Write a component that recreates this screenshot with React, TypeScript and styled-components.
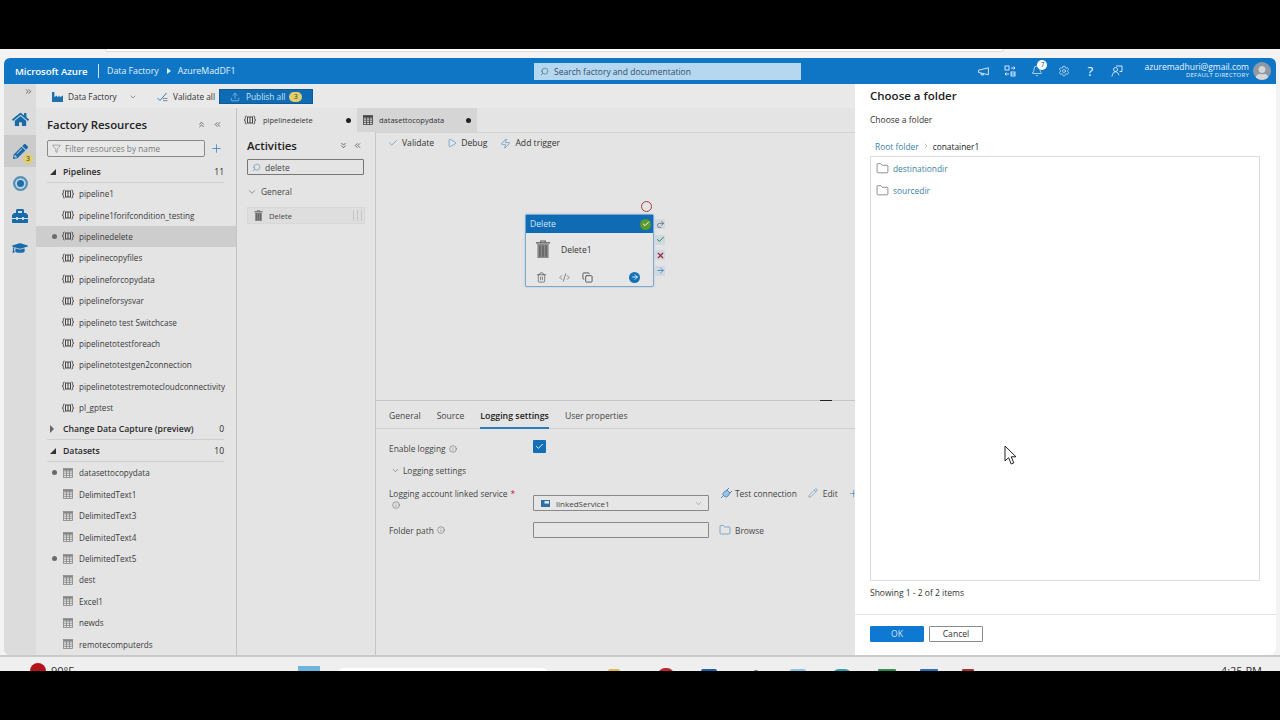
import React from 'react';
import styled, { createGlobalStyle } from 'styled-components';
import {
  ArrowRight,
  Bell,
  Check,
  ChevronDown,
  ChevronRight,
  ChevronsDown,
  ChevronsLeft,
  ChevronsRight,
  ChevronsUp,
  CodeXml,
  Copy,
  Filter,
  Folder,
  Info,
  Pencil,
  Play,
  Plus,
  Redo2,
  Search,
  Settings,
  Trash2,
  Upload,
  X,
  Zap,
} from 'lucide-react';
import { FaGraduationCap, FaHome, FaPencilAlt, FaToolbox, FaUser } from 'react-icons/fa';

const GlobalStyle = createGlobalStyle`
  html, body {
    margin: 0;
    padding: 0;
    background: #000;
    overflow: hidden;
  }
  * {
    box-sizing: border-box;
  }
  body {
    font-family: "Open Sans", "Liberation Sans", sans-serif;
    font-size: 9px;
    color: #333;
  }
`;

const pipelines = [
  { name: 'pipeline1' },
  { name: 'pipeline1forifcondition_testing' },
  { name: 'pipelinedelete', dirty: true, selected: true },
  { name: 'pipelinecopyfiles' },
  { name: 'pipelineforcopydata' },
  { name: 'pipelineforsysvar' },
  { name: 'pipelineto test Switchcase' },
  { name: 'pipelinetotestforeach' },
  { name: 'pipelinetotestgen2connection' },
  { name: 'pipelinetotestremotecloudconnectivity' },
  { name: 'pl_gptest' },
];

const datasets = [
  { name: 'datasettocopydata', dirty: true },
  { name: 'DelimitedText1' },
  { name: 'DelimitedText3' },
  { name: 'DelimitedText4' },
  { name: 'DelimitedText5', dirty: true },
  { name: 'dest' },
  { name: 'Excel1' },
  { name: 'newds' },
  { name: 'remotecomputerds' },
];

// bits of the desktop taskbar that still show under the browser window
const trayMarks = [
  { ml: 223, w: 22, c: '#6fb4dc', top: 9, radius: 0 },
  { ml: 17, w: 212, c: '#ffffff', top: 11, radius: 8 },
  { ml: 59, w: 12, c: '#e2b84a', top: 12, radius: 2 },
  { ml: 38, w: 16, c: '#b8262e', top: 11, radius: 8 },
  { ml: 27, w: 16, c: '#1f5fa8', top: 12, radius: 2 },
  { ml: 37, w: 4, c: '#5f8fb0', top: 13, radius: 1 },
  { ml: 32, w: 16, c: '#8cc4e0', top: 12, radius: 2 },
  { ml: 26, w: 20, c: '#2fa0a8', top: 12, radius: 9 },
  { ml: 26, w: 18, c: '#2f8f4f', top: 12, radius: 1 },
  { ml: 24, w: 18, c: '#2a6fb0', top: 12, radius: 1 },
  { ml: 24, w: 12, c: '#a03030', top: 12, radius: 1 },
];

const PipelineIcon = () => (
  <svg width="14" height="10" viewBox="0 0 14 10" fill="none" stroke="#444" strokeWidth="1">
    <path d="M3.5 1C2 1 2.4 2.2 2.4 3.4 2.4 4.4 1.8 5 1 5c.8 0 1.4.6 1.4 1.6C2.4 7.8 2 9 3.5 9" />
    <path d="M10.5 1C12 1 11.6 2.2 11.6 3.4c0 1 .6 1.6 1.4 1.6-.8 0-1.4.6-1.4 1.6C11.6 7.8 12 9 10.5 9" />
    <rect x="4.5" y="2" width="5" height="6" />
    <path d="M7 2v6" />
  </svg>
);

const TableIcon = ({ dark }: { dark?: boolean }) => (
  <svg width="10" height="10" viewBox="0 0 10 10" fill="none" stroke={dark ? '#444' : '#858585'} strokeWidth="0.8">
    <rect x="0.5" y="0.5" width="9" height="9" />
    <path d="M0.5 3h9M0.5 5.2h9M0.5 7.4h9M3.5 0.5v9M6.5 0.5v9" />
    <path d="M0.5 1.7h9" strokeWidth="1.6" />
  </svg>
);

const BinIcon = ({ size }: { size: number }) => (
  <svg width={size} height={size} viewBox="0 0 12 14" fill="none">
    <path d="M0.5 2.2h11" stroke="#555" strokeWidth="1" />
    <path d="M4.2 2V0.8h3.6V2" stroke="#555" strokeWidth="0.8" />
    <path d="M1.6 3.2h8.8V14H1.6z" fill="#8a8a8a" />
    <path d="M3.6 4.2V13M6 4.2V13M8.4 4.2V13" stroke="#555" strokeWidth="0.9" />
  </svg>
);

const FactoryIcon = () => (
  <svg width="11" height="10" viewBox="0 0 11 10" fill="#1d6fae">
    <path d="M0 0h2.4v5L5 3.4v1.8l2.6-1.8v1.8L11 3.4V10H0z" />
  </svg>
);

const ValidateAllIcon = () => (
  <svg width="11" height="10" viewBox="0 0 11 10" fill="none" stroke="#2d7fc0" strokeWidth="1">
    <path d="M0.5 6l2.5 2.5L9.5 1" />
    <path d="M6 6.5h4.5M6 8.7h4.5" stroke="#888" />
  </svg>
);

const MegaphoneIcon = () => (
  <svg width="11" height="9" viewBox="0 0 11 9" fill="none" stroke="#fff" strokeWidth="0.8">
    <path d="M0.5 3.2L10.4 0.8v7L0.5 5.4zM3 6l.4 2h2l-.3-1.5" />
  </svg>
);

const SwitchIcon = () => (
  <svg width="12" height="12" viewBox="0 0 12 12" fill="none" stroke="#fff" strokeWidth="0.8">
    <rect x="1" y="1" width="4" height="4" />
    <rect x="7" y="7" width="4" height="4" />
    <path d="M7 3h4M9.5 1.5L11 3 9.5 4.5M5 9H1M2.5 7.5L1 9l1.5 1.5M7 9h4" />
  </svg>
);

const FeedbackIcon = () => (
  <svg width="12" height="12" viewBox="0 0 12 12" fill="none" stroke="#fff" strokeWidth="0.8">
    <circle cx="4.5" cy="4.5" r="2" />
    <path d="M1 11.5c.3-2.8 1.6-4.6 3.5-4.6s3 1.4 3.4 3.4M5 1h6v5.5H8.6" />
  </svg>
);

const PlugIcon = () => (
  <svg width="13" height="12" viewBox="0 0 13 12" fill="none" stroke="#3b82bd" strokeWidth="0.9">
    <path d="M1 11l3-3M9 1L7 3M12 4l-2 2" />
    <path d="M3.5 5.5L7 3l3 3-2.5 3.5c-1.5 1-3 .2-4-1s-1-2 0-3z" fill="#9cc0dd" />
  </svg>
);

const StoreIcon = () => (
  <svg width="9" height="7" viewBox="0 0 9 7">
    <rect width="9" height="7" fill="#2f6f9f" />
    <rect x="3.5" y="1" width="4.5" height="2.6" fill="#d7e6f1" />
  </svg>
);

const PointerIcon = () => (
  <svg width="14" height="21" viewBox="0 0 14 21">
    <path d="M1 1v15l3.6-3.3 2.6 6.3 2.6-1.1-2.6-6.1H12z" fill="#fff" stroke="#222" strokeWidth="1" />
  </svg>
);

const FlippedSearch = styled(Search)`
  transform: scaleX(-1);
`;

const Page = styled.div`
  width: 1280px;
  height: 720px;
  background: #000;
  display: flex;
  flex-direction: column;
  overflow: hidden;
`;

const Letterbox = styled.div`
  height: 49px;
  flex: none;
  background: #000;
`;

const Desktop = styled.div`
  flex: none;
  background: #f3f3f3;
`;

const TopStrip = styled.div`
  height: 9px;
  padding: 0 276px 0 105px;
`;

const BrowserTabEdge = styled.div`
  height: 3px;
  background: #fff;
  border: 1px solid #ddd;
  border-top: 0;
  border-radius: 0 0 10px 10px;
`;

const Taskbar = styled.div`
  height: 16px;
  flex: none;
  background: #efefef;
  border-top: 2px solid #c9c9c9;
  display: flex;
  align-items: flex-start;
  overflow: hidden;
  padding: 0 18px 0 30px;
`;

const WeatherDot = styled.span`
  width: 16px;
  height: 16px;
  margin-top: 6px;
  border-radius: 50%;
  background: #b3141c;
  flex: none;
`;

const TaskbarText = styled.span`
  font-size: 11px;
  line-height: 13px;
  margin-top: 7px;
  color: #333;
  white-space: nowrap;
`;

const WeatherText = styled(TaskbarText)`
  margin-left: 5px;
  width: 24px;
`;

const Clock = styled(TaskbarText)`
  margin-left: auto;
`;

const TrayMark = styled.span<{ $c: string; $w: number; $ml: number; $top: number; $radius: number }>`
  width: ${(p) => p.$w}px;
  height: 14px;
  margin-top: ${(p) => p.$top}px;
  margin-left: ${(p) => p.$ml}px;
  background: ${(p) => p.$c};
  flex: none;
  border-radius: ${(p) => p.$radius}px;
`;

const AppWindow = styled.div`
  width: 1272px;
  height: 597px;
  margin-left: 4px;
  display: flex;
  flex-direction: column;
  background: #e4e4e4;
  border-radius: 6px;
  overflow: hidden;
  position: relative;
`;

const Header = styled.header`
  height: 26px;
  flex: none;
  background: #0f76c6;
  display: flex;
  align-items: center;
  color: #fff;
  padding-left: 11px;
  position: relative;
`;

const Brand = styled.span`
  font-size: 9.7px;
  font-weight: 600;
  width: 83px;
  white-space: nowrap;
  letter-spacing: -0.1px;
`;

const HeaderDivider = styled.span`
  width: 1px;
  height: 14px;
  background: #cfe4f5;
  margin-right: 8px;
`;

const Crumb = styled.span`
  font-size: 8.8px;
  color: #e2f0fa;
  white-space: nowrap;
`;

const CrumbArrow = styled.span`
  width: 0;
  height: 0;
  margin: 0 7px 0 8px;
  border-left: 4px solid #e2f0fa;
  border-top: 3px solid transparent;
  border-bottom: 3px solid transparent;
`;

const GlobalSearch = styled.div`
  position: absolute;
  left: 530px;
  top: 5px;
  width: 267px;
  height: 17px;
  background: #b6d7f0;
  display: flex;
  align-items: center;
  gap: 5px;
  padding-left: 6px;
  font-size: 8.5px;
  color: #2f5068;
`;

const HeaderRight = styled.div`
  margin-left: auto;
  display: flex;
  align-items: center;
  padding-right: 5px;
`;

const HeaderIcon = styled.span`
  width: 26.8px;
  display: flex;
  justify-content: center;
  color: #fff;
  position: relative;
  font-size: 13px;
  line-height: 12px;
`;

const BellBadge = styled.span`
  position: absolute;
  top: -5px;
  left: 14px;
  width: 10px;
  height: 10px;
  border-radius: 50%;
  background: #fff;
  color: #14619c;
  font-size: 7px;
  line-height: 10px;
  text-align: center;
`;

const Account = styled.div`
  display: flex;
  flex-direction: column;
  align-items: flex-end;
  margin-left: 14px;
  margin-right: 4px;
  line-height: 9px;
`;

const AccountMail = styled.span`
  font-size: 8.5px;
  color: #eaf4fb;
`;

const AccountDir = styled.span`
  font-size: 6px;
  color: #e3eff8;
  letter-spacing: 0.25px;
`;

const Avatar = styled.span`
  width: 18px;
  height: 18px;
  border-radius: 50%;
  background: #8d9aa5;
  display: flex;
  align-items: flex-end;
  justify-content: center;
  overflow: hidden;
  color: #d6d6d6;
`;

const Body = styled.div`
  flex: 1;
  min-height: 0;
  display: flex;
`;

const Rail = styled.nav`
  width: 32px;
  flex: none;
  background: #dcdcdc;
  display: flex;
  flex-direction: column;
  align-items: stretch;
`;

const RailToggle = styled.div`
  height: 20px;
  display: flex;
  justify-content: flex-end;
  padding: 3px 3px 0 0;
  color: #444;
`;

const RailItem = styled.div<{ $active?: boolean; $h?: number }>`
  height: ${(p) => p.$h ?? 32.4}px;
  display: flex;
  align-items: center;
  justify-content: center;
  background: ${(p) => (p.$active ? '#cbcbcb' : 'transparent')};
  color: #176ba8;
  position: relative;
`;

const RailBadge = styled.span`
  position: absolute;
  right: 3px;
  bottom: 3px;
  width: 10px;
  height: 10px;
  border-radius: 50%;
  background: #e3cf6a;
  color: #333;
  font-size: 7px;
  line-height: 10px;
  text-align: center;
`;

const Gauge = styled.span`
  width: 15px;
  height: 15px;
  border-radius: 50%;
  background: #1d6fa8;
  border: 2px solid #5a8fb5;
  box-shadow: inset 0 0 0 2px #bcd4e4;
`;

const Workspace = styled.div`
  flex: 1;
  min-width: 0;
  display: flex;
  flex-direction: column;
  overflow: hidden;
`;

const TopToolbar = styled.div`
  height: 24px;
  flex: none;
  background: #e9e9e9;
  display: flex;
  align-items: center;
  padding: 1px 0 0 16px;
  font-size: 8.3px;
  color: #333;
`;

const ToolItem = styled.span<{ $w: number }>`
  display: flex;
  align-items: center;
  gap: 5px;
  width: ${(p) => p.$w}px;
  white-space: nowrap;
`;

const ToolChevron = styled(ChevronDown)`
  margin-left: 7px;
  color: #666;
`;

const PublishButton = styled.span`
  width: 94px;
  height: 15px;
  background: #0f6cb4;
  border: 1px solid #0c5b98;
  color: #cde3f4;
  display: flex;
  align-items: center;
  gap: 6px;
  padding-left: 10px;
`;

const PublishCount = styled.span`
  width: 13px;
  height: 10px;
  margin-left: -2px;
  border-radius: 5px;
  background: #e3cf6a;
  color: #333;
  font-size: 7px;
  line-height: 10px;
  text-align: center;
`;

const Columns = styled.div`
  flex: 1;
  min-height: 0;
  display: flex;
`;

const Resources = styled.aside`
  width: 201px;
  flex: none;
  border-right: 1px solid #c4c4c4;
  display: flex;
  flex-direction: column;
  overflow: hidden;
`;

const ResHead = styled.div`
  display: flex;
  align-items: center;
  justify-content: space-between;
  padding: 0 14px 0 11px;
  height: 32px;
  flex: none;
  color: #333;
`;

const PanelTitle = styled.h2`
  margin: 0;
  font-size: 11.4px;
  font-weight: 600;
  color: #222;
  white-space: nowrap;
`;

const IconPair = styled.span<{ $gap?: number }>`
  display: flex;
  gap: ${(p) => p.$gap ?? 5}px;
  color: #444;
`;

const FilterRow = styled.div`
  display: flex;
  align-items: center;
  gap: 5px;
  padding-left: 11px;
  height: 17px;
  flex: none;
  color: #3a87c4;
`;

const FilterInput = styled.div`
  width: 158px;
  height: 17px;
  border: 1px solid #8a8a8a;
  border-radius: 2px;
  display: flex;
  align-items: center;
  gap: 4px;
  padding-left: 4px;
  font-size: 8.3px;
  color: #7a7a7a;
  background: #e8e8e8;
`;

const TreeHead = styled.div<{ $first?: boolean }>`
  height: 22px;
  flex: none;
  margin: ${(p) => (p.$first ? '4px' : '0')} 12px 0 11px;
  display: flex;
  align-items: center;
  border-bottom: 1px solid #cfcfcf;
  font-weight: 600;
  color: #2a2a2a;
  font-size: 8.7px;
`;

const TreeCaret = styled.span`
  width: 16px;
  display: flex;
  color: #333;
`;

const CaretDown = styled.span`
  width: 0;
  height: 0;
  margin-left: 3px;
  border-left: 6px solid transparent;
  border-bottom: 6px solid #333;
`;

const CaretRight = styled.span`
  width: 0;
  height: 0;
  margin-left: 3px;
  border-left: 4px solid #666;
  border-top: 4px solid transparent;
  border-bottom: 4px solid transparent;
`;

const TreeCount = styled.span`
  margin-left: auto;
  font-weight: 400;
  font-size: 8.5px;
`;

const TreeRow = styled.div<{ $selected?: boolean }>`
  height: 21.4px;
  flex: none;
  display: flex;
  align-items: center;
  padding-left: 16px;
  background: ${(p) => (p.$selected ? '#cdcdcd' : 'transparent')};
  color: #3a3a3a;
  font-size: 8.15px;
  white-space: nowrap;
`;

const DirtyDot = styled.span<{ $on?: boolean; $c?: string }>`
  width: 5px;
  height: 5px;
  border-radius: 50%;
  background: ${(p) => (p.$on === false ? 'transparent' : p.$c ?? '#6b6b6b')};
  flex: none;
`;

const RowIcon = styled.span`
  width: 14px;
  margin: 0 4px;
  display: flex;
  justify-content: center;
  flex: none;
`;

const EditorArea = styled.div`
  flex: 1;
  min-width: 0;
  display: flex;
  flex-direction: column;
`;

const DocTabs = styled.div`
  height: 24px;
  flex: none;
  display: flex;
`;

const DocTab = styled.div<{ $active?: boolean }>`
  width: 120px;
  display: flex;
  align-items: center;
  padding: 0 6px 0 6px;
  gap: 6px;
  background: ${(p) => (p.$active ? '#e4e4e4' : '#d5d5d5')};
  font-size: 7.5px;
  color: #333;
  & > span:nth-child(2) {
    flex: 1;
    white-space: nowrap;
  }
`;

const EditorRow = styled.div`
  flex: 1;
  min-height: 0;
  display: flex;
`;

const Activities = styled.section`
  width: 139px;
  flex: none;
  border-right: 1px solid #c4c4c4;
  padding: 0 10px;
  display: flex;
  flex-direction: column;
`;

const ActivitiesHead = styled.div`
  display: flex;
  align-items: center;
  justify-content: space-between;
  height: 27px;
  padding-right: 3px;
`;

const SearchBox = styled.div`
  height: 16px;
  width: 117px;
  border: 1px solid #777;
  border-radius: 1px;
  display: flex;
  align-items: center;
  gap: 4px;
  padding-left: 4px;
  font-size: 8.5px;
  color: #444;
  & > svg {
    color: #4a7fb0;
  }
`;

const GroupLabel = styled.div`
  display: flex;
  align-items: center;
  gap: 4px;
  margin-top: 8px;
  height: 17px;
  font-size: 8.4px;
  color: #444;
`;

const ActivityItem = styled.div`
  height: 17px;
  width: 118px;
  margin-top: 7px;
  background: #dedede;
  border: 1px solid #d7d7d7;
  display: flex;
  align-items: center;
  gap: 5px;
  padding-left: 5px;
  font-size: 7.6px;
  color: #444;
  position: relative;
`;

const Grip = styled.span`
  position: absolute;
  right: 2px;
  top: 2px;
  bottom: 2px;
  width: 9px;
  background: repeating-linear-gradient(90deg, #c6c6c6 0 1px, transparent 1px 4px);
`;

const Designer = styled.section`
  flex: 1;
  min-width: 0;
  display: flex;
  flex-direction: column;
  border-top: 1px solid #d4d4d4;
`;

const DesignerBar = styled.div`
  height: 20px;
  flex: none;
  display: flex;
  align-items: center;
  padding-left: 12px;
  gap: 13px;
  font-size: 8.6px;
  color: #333;
  & svg {
    color: #2d7fc0;
  }
`;

const BarAction = styled.span`
  display: flex;
  align-items: center;
  gap: 4px;
  white-space: nowrap;
`;

const Canvas = styled.div`
  height: 248px;
  flex: none;
  position: relative;
  border-bottom: 1px solid #c4c4c4;
`;

const ResizeMark = styled.span`
  position: absolute;
  left: 444px;
  bottom: -1px;
  width: 12px;
  height: 1.5px;
  background: #222;
`;

const NodeCircle = styled.span`
  position: absolute;
  left: 265px;
  top: 48px;
  width: 11px;
  height: 11px;
  border-radius: 50%;
  border: 1px solid #a83a4a;
`;

const Node = styled.div`
  position: absolute;
  left: 149px;
  top: 61px;
  width: 129px;
  height: 73px;
  background: #e6e6e6;
  border: 1px solid #7ba8cc;
  border-radius: 2px;
  box-shadow: 0 0 2px #9cbcd6;
  display: flex;
  flex-direction: column;
`;

const NodeTitle = styled.div`
  height: 18px;
  flex: none;
  background: #0f6bb3;
  color: #d4e8f6;
  font-size: 8.6px;
  display: flex;
  align-items: center;
  justify-content: space-between;
  padding: 0 2px 0 4px;
`;

const OkBadge = styled.span`
  width: 11px;
  height: 11px;
  border-radius: 50%;
  background: #5b9b2a;
  color: #fff;
  display: flex;
  align-items: center;
  justify-content: center;
`;

const NodeBody = styled.div`
  flex: 1;
  display: flex;
  align-items: center;
  gap: 9px;
  padding: 0 0 3px 8px;
  color: #333;
  font-size: 8.5px;
`;

const NodeActions = styled.div`
  height: 18px;
  flex: none;
  display: flex;
  align-items: center;
  padding: 0 13px 0 10px;
  gap: 12px;
  color: #4a4a4a;
`;

const NodeGo = styled.span`
  margin-left: auto;
  width: 11px;
  height: 11px;
  border-radius: 50%;
  background: #1473b8;
  color: #fff;
  display: flex;
  align-items: center;
  justify-content: center;
`;

const NodePorts = styled.div`
  position: absolute;
  left: 279px;
  top: 66px;
  display: flex;
  flex-direction: column;
  gap: 5.5px;
`;

const Port = styled.span<{ $c: string }>`
  width: 10px;
  height: 10px;
  background: #ced9e2;
  color: ${(p) => p.$c};
  display: flex;
  align-items: center;
  justify-content: center;
`;

const BottomPanel = styled.div`
  flex: 1;
  min-height: 0;
  overflow: hidden;
`;

const PanelTabs = styled.div`
  height: 28px;
  border-bottom: 1px solid #d0d0d0;
  display: flex;
  padding-left: 13px;
  gap: 16px;
  font-size: 8.6px;
  color: #444;
`;

const PanelTab = styled.span<{ $active?: boolean }>`
  display: flex;
  align-items: center;
  height: 28px;
  padding-top: 3px;
  white-space: nowrap;
  font-weight: ${(p) => (p.$active ? 600 : 400)};
  font-size: ${(p) => (p.$active ? 8.8 : 8.6)}px;
  color: ${(p) => (p.$active ? '#222' : '#444')};
  border-bottom: 2px solid ${(p) => (p.$active ? '#2b7cbc' : 'transparent')};
`;

const Form = styled.div`
  display: grid;
  grid-template-columns: 144px 1fr;
  padding: 10px 0 0 13px;
  font-size: 8.4px;
  color: #444;
  align-items: center;
  width: 479px;
`;

const FieldLabel = styled.div<{ $h: number }>`
  height: ${(p) => p.$h}px;
  display: flex;
  align-items: center;
  gap: 3px;
  white-space: nowrap;
  color: #444;
`;

const Required = styled.span`
  color: #c22;
  margin-left: 3px;
`;

const TwoLine = styled.div`
  display: flex;
  flex-direction: column;
  gap: 2px;
  height: 38px;
  padding-top: 6px;
  white-space: nowrap;
`;

const LabelInfo = styled(Info)`
  margin-left: 3px;
`;

const CheckBox = styled.span`
  width: 13px;
  height: 13px;
  margin-top: -4px;
  background: #136fb6;
  color: #fff;
  display: flex;
  align-items: center;
  justify-content: center;
  border-radius: 1px;
`;

const FoldRow = styled.div`
  grid-column: 1 / span 2;
  height: 24px;
  display: flex;
  align-items: center;
  gap: 3px;
  padding-left: 2px;
`;

const FieldRow = styled.div<{ $top?: number }>`
  display: flex;
  align-items: center;
  white-space: nowrap;
  min-width: 0;
  align-self: ${(p) => (p.$top ? 'start' : 'center')};
  padding-top: ${(p) => p.$top ?? 0}px;
`;

const Select = styled.div`
  width: 176px;
  height: 16px;
  border: 1px solid #888;
  border-radius: 1px;
  display: flex;
  align-items: center;
  padding: 0 5px 0 7px;
  gap: 6px;
  font-size: 8px;
  color: #444;
  flex: none;
  background: #e6e6e6;
  & > svg:last-child {
    margin-left: auto;
    color: #777;
  }
`;

const FieldAction = styled.span<{ $ml: number; $gap?: number; $raised?: boolean }>`
  display: flex;
  align-items: center;
  gap: ${(p) => p.$gap ?? 4}px;
  height: 12px;
  margin-left: ${(p) => p.$ml}px;
  margin-top: ${(p) => (p.$raised ? '-8px' : '0')};
  align-self: ${(p) => (p.$raised ? 'flex-start' : 'center')};
  color: #444;
  flex: none;
  & > svg {
    color: #3b82bd;
  }
`;

const FolderPanel = styled.aside`
  width: 421px;
  flex: none;
  background: #fff;
  display: flex;
  flex-direction: column;
`;

const FolderBody = styled.div`
  flex: 1;
  min-height: 0;
  display: flex;
  flex-direction: column;
  padding: 0 16px 0 15px;
`;

const FolderTitle = styled.h1`
  margin: 3px 0 0;
  height: 17px;
  font-size: 11.5px;
  line-height: 17px;
  font-weight: 600;
  color: #222;
`;

const FolderSub = styled.div`
  margin-top: 10px;
  height: 12px;
  font-size: 8.5px;
  line-height: 12px;
  color: #333;
`;

const Breadcrumb = styled.div`
  margin-top: 13px;
  height: 14px;
  display: flex;
  align-items: center;
  gap: 3px;
  padding-left: 5px;
  font-size: 8.4px;
  color: #222;
  & > svg {
    color: #666;
  }
`;

const RootLink = styled.span`
  color: #3b7fa6;
`;

const FolderBox = styled.div`
  margin-top: 3px;
  height: 425px;
  flex: none;
  border: 1px solid #dcdcdc;
  padding: 0 0 0 5px;
`;

const FolderRow = styled.div`
  height: 22.4px;
  display: flex;
  align-items: center;
  gap: 4px;
  font-size: 8.4px;
  color: #3b7fa6;
  & > svg {
    color: #333;
  }
`;

const Showing = styled.div`
  margin-top: 6px;
  font-size: 8.5px;
  color: #333;
`;

const FolderFoot = styled.div`
  height: 41px;
  flex: none;
  border-top: 1px solid #e3e3e3;
  display: flex;
  align-items: flex-start;
  gap: 5px;
  padding: 11px 0 0 15px;
`;

const Button = styled.span<{ $primary?: boolean }>`
  width: 54px;
  height: 16px;
  display: flex;
  align-items: center;
  justify-content: center;
  font-size: 8.6px;
  border-radius: 1px;
  background: ${(p) => (p.$primary ? '#0f78d0' : '#fff')};
  color: ${(p) => (p.$primary ? '#cfe6f8' : '#333')};
  border: 1px solid ${(p) => (p.$primary ? '#0f78d0' : '#8a8a8a')};
`;

const Pointer = styled.span`
  position: absolute;
  left: 1000px;
  top: 387px;
  display: flex;
`;

type TreeItem = { name: string; dirty?: boolean; selected?: boolean };

const Tree = ({ items, icon }: { items: TreeItem[]; icon: 'pipe' | 'table' }) => (
  <>
    {items.map((item) => (
      <TreeRow key={item.name} $selected={item.selected}>
        <DirtyDot $on={!!item.dirty} />
        <RowIcon>{icon === 'pipe' ? <PipelineIcon /> : <TableIcon />}</RowIcon>
        {item.name}
      </TreeRow>
    ))}
  </>
);

const App = () => {
  return (
    <Page>
      <GlobalStyle />
      <Letterbox />
      <Desktop>
        <TopStrip>
          <BrowserTabEdge />
        </TopStrip>
        <AppWindow>
          <Header>
            <Brand>Microsoft Azure</Brand>
            <HeaderDivider />
            <Crumb>Data Factory</Crumb>
            <CrumbArrow />
            <Crumb>AzureMadDF1</Crumb>
            <GlobalSearch>
              <FlippedSearch size={9} strokeWidth={1.4} />
              Search factory and documentation
            </GlobalSearch>
            <HeaderRight>
              <HeaderIcon>
                <MegaphoneIcon />
              </HeaderIcon>
              <HeaderIcon>
                <SwitchIcon />
              </HeaderIcon>
              <HeaderIcon>
                <Bell size={12} strokeWidth={1.3} />
                <BellBadge>7</BellBadge>
              </HeaderIcon>
              <HeaderIcon>
                <Settings size={12} strokeWidth={1.2} />
              </HeaderIcon>
              <HeaderIcon>?</HeaderIcon>
              <HeaderIcon>
                <FeedbackIcon />
              </HeaderIcon>
              <Account>
                <AccountMail>azuremadhuri@gmail.com</AccountMail>
                <AccountDir>DEFAULT DIRECTORY</AccountDir>
              </Account>
              <Avatar>
                <FaUser size={14} />
              </Avatar>
            </HeaderRight>
          </Header>
          <Body>
            <Rail>
              <RailToggle>
                <ChevronsRight size={9} />
              </RailToggle>
              <RailItem $h={31}>
                <FaHome size={17} />
              </RailItem>
              <RailItem $active>
                <FaPencilAlt size={15} />
                <RailBadge>3</RailBadge>
              </RailItem>
              <RailItem>
                <Gauge />
              </RailItem>
              <RailItem>
                <FaToolbox size={16} />
              </RailItem>
              <RailItem>
                <FaGraduationCap size={16} />
              </RailItem>
            </Rail>
            <Workspace>
              <TopToolbar>
                <ToolItem $w={105}>
                  <FactoryIcon />
                  Data Factory
                  <ToolChevron size={8} />
                </ToolItem>
                <ToolItem $w={62}>
                  <ValidateAllIcon />
                  Validate all
                </ToolItem>
                <PublishButton>
                  <Upload size={10} strokeWidth={1.3} />
                  Publish all
                  <PublishCount>3</PublishCount>
                </PublishButton>
              </TopToolbar>
              <Columns>
                <Resources>
                  <ResHead>
                    <PanelTitle>Factory Resources</PanelTitle>
                    <IconPair $gap={7}>
                      <ChevronsUp size={9} />
                      <ChevronsLeft size={9} />
                    </IconPair>
                  </ResHead>
                  <FilterRow>
                    <FilterInput>
                      <Filter size={9} color="#666" strokeWidth={1.3} />
                      Filter resources by name
                    </FilterInput>
                    <Plus size={13} strokeWidth={1.5} />
                  </FilterRow>
                  <TreeHead $first>
                    <TreeCaret>
                      <CaretDown />
                    </TreeCaret>
                    Pipelines
                    <TreeCount>11</TreeCount>
                  </TreeHead>
                  <Tree items={pipelines} icon="pipe" />
                  <TreeHead>
                    <TreeCaret>
                      <CaretRight />
                    </TreeCaret>
                    Change Data Capture (preview)
                    <TreeCount>0</TreeCount>
                  </TreeHead>
                  <TreeHead>
                    <TreeCaret>
                      <CaretDown />
                    </TreeCaret>
                    Datasets
                    <TreeCount>10</TreeCount>
                  </TreeHead>
                  <Tree items={datasets} icon="table" />
                </Resources>
                <EditorArea>
                  <DocTabs>
                    <DocTab $active>
                      <PipelineIcon />
                      <span>pipelinedelete</span>
                      <DirtyDot $c="#222" />
                    </DocTab>
                    <DocTab>
                      <TableIcon dark />
                      <span>datasettocopydata</span>
                      <DirtyDot $c="#222" />
                    </DocTab>
                  </DocTabs>
                  <EditorRow>
                    <Activities>
                      <ActivitiesHead>
                        <PanelTitle>Activities</PanelTitle>
                        <IconPair>
                          <ChevronsDown size={9} />
                          <ChevronsLeft size={9} />
                        </IconPair>
                      </ActivitiesHead>
                      <SearchBox>
                        <FlippedSearch size={9} strokeWidth={1.4} />
                        delete
                      </SearchBox>
                      <GroupLabel>
                        <ChevronDown size={10} strokeWidth={1.3} />
                        General
                      </GroupLabel>
                      <ActivityItem>
                        <BinIcon size={11} />
                        Delete
                        <Grip />
                      </ActivityItem>
                    </Activities>
                    <Designer>
                      <DesignerBar>
                        <BarAction>
                          <Check size={10} strokeWidth={1.4} />
                          Validate
                        </BarAction>
                        <BarAction>
                          <Play size={10} strokeWidth={1.3} />
                          Debug
                        </BarAction>
                        <BarAction>
                          <Zap size={11} strokeWidth={1.2} />
                          Add trigger
                        </BarAction>
                      </DesignerBar>
                      <Canvas>
                        <NodeCircle />
                        <Node>
                          <NodeTitle>
                            Delete
                            <OkBadge>
                              <Check size={8} strokeWidth={3} />
                            </OkBadge>
                          </NodeTitle>
                          <NodeBody>
                            <BinIcon size={18} />
                            Delete1
                          </NodeBody>
                          <NodeActions>
                            <Trash2 size={11} strokeWidth={1.4} />
                            <CodeXml size={11} strokeWidth={1.4} />
                            <Copy size={11} strokeWidth={1.9} />
                            <NodeGo>
                              <ArrowRight size={8} strokeWidth={2.5} />
                            </NodeGo>
                          </NodeActions>
                        </Node>
                        <NodePorts>
                          <Port $c="#666">
                            <Redo2 size={9} strokeWidth={2} />
                          </Port>
                          <Port $c="#2e8b2e">
                            <Check size={9} strokeWidth={2.6} />
                          </Port>
                          <Port $c="#a01c2c">
                            <X size={9} strokeWidth={3} />
                          </Port>
                          <Port $c="#2d6fb0">
                            <ArrowRight size={9} strokeWidth={1.8} />
                          </Port>
                        </NodePorts>
                        <ResizeMark />
                      </Canvas>
                      <BottomPanel>
                        <PanelTabs>
                          <PanelTab>General</PanelTab>
                          <PanelTab>Source</PanelTab>
                          <PanelTab $active>Logging settings</PanelTab>
                          <PanelTab>User properties</PanelTab>
                        </PanelTabs>
                        <Form>
                          <FieldLabel $h={19}>
                            Enable logging
                            <Info size={8} strokeWidth={1.3} />
                          </FieldLabel>
                          <FieldRow>
                            <CheckBox>
                              <Check size={9} strokeWidth={2.4} />
                            </CheckBox>
                          </FieldRow>
                          <FoldRow>
                            <ChevronDown size={9} strokeWidth={1.3} />
                            Logging settings
                          </FoldRow>
                          <TwoLine>
                            <span>
                              Logging account linked service<Required>*</Required>
                            </span>
                            <LabelInfo size={8} strokeWidth={1.3} />
                          </TwoLine>
                          <FieldRow $top={13}>
                            <Select>
                              <StoreIcon />
                              linkedService1
                              <ChevronDown size={9} strokeWidth={1.3} />
                            </Select>
                            <FieldAction $ml={11} $gap={2} $raised>
                              <PlugIcon />
                              Test connection
                            </FieldAction>
                            <FieldAction $ml={11} $gap={5} $raised>
                              <Pencil size={10} strokeWidth={1.2} />
                              Edit
                            </FieldAction>
                            <FieldAction $ml={10} $raised>
                              <Plus size={11} strokeWidth={1.3} />
                            </FieldAction>
                          </FieldRow>
                          <FieldLabel $h={20}>
                            Folder path
                            <Info size={8} strokeWidth={1.3} />
                          </FieldLabel>
                          <FieldRow>
                            <Select />
                            <FieldAction $ml={10}>
                              <Folder size={12} strokeWidth={1.2} />
                              Browse
                            </FieldAction>
                          </FieldRow>
                        </Form>
                      </BottomPanel>
                    </Designer>
                  </EditorRow>
                </EditorArea>
              </Columns>
            </Workspace>
            <FolderPanel>
              <FolderBody>
                <FolderTitle>Choose a folder</FolderTitle>
                <FolderSub>Choose a folder</FolderSub>
                <Breadcrumb>
                  <RootLink>Root folder</RootLink>
                  <ChevronRight size={8} strokeWidth={1.2} />
                  conatainer1
                </Breadcrumb>
                <FolderBox>
                  <FolderRow>
                    <Folder size={13} strokeWidth={1} />
                    destinationdir
                  </FolderRow>
                  <FolderRow>
                    <Folder size={13} strokeWidth={1} />
                    sourcedir
                  </FolderRow>
                </FolderBox>
                <Showing>Showing 1 - 2 of 2 items</Showing>
              </FolderBody>
              <FolderFoot>
                <Button $primary>OK</Button>
                <Button>Cancel</Button>
              </FolderFoot>
            </FolderPanel>
          </Body>
          <Pointer>
            <PointerIcon />
          </Pointer>
        </AppWindow>
        <Taskbar>
          <WeatherDot />
          <WeatherText>90°F</WeatherText>
          {trayMarks.map((m, i) => (
            <TrayMark key={i} $c={m.c} $w={m.w} $ml={m.ml} $top={m.top} $radius={m.radius} />
          ))}
          <Clock>4:25 PM</Clock>
        </Taskbar>
      </Desktop>
    </Page>
  );
};

export default App;
